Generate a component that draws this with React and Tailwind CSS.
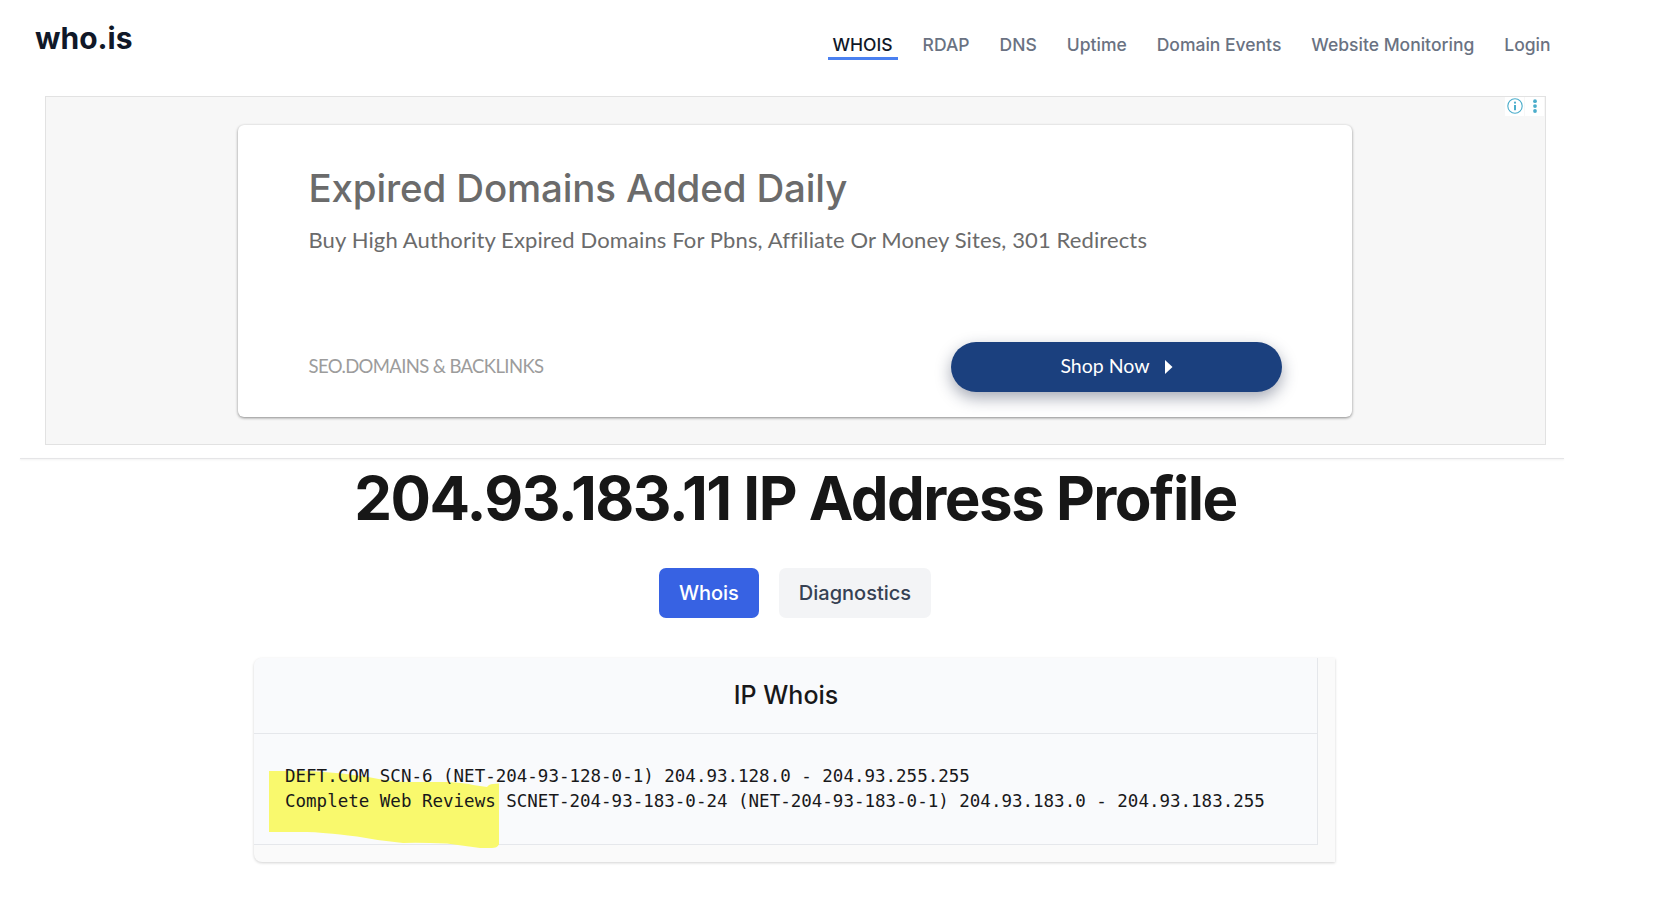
import React from "react";

const navItems = ["RDAP", "DNS", "Uptime", "Domain Events", "Website Monitoring", "Login"];

function Header() {
  return (
    <header className="flex h-[96px] items-start justify-between pl-[35px] pr-[34.5px]">
      <a className="mt-[18px] text-[30px] font-bold leading-[40px] text-gray-900">who.is</a>
      <nav className="mt-[32px] flex gap-5 text-[17.5px] font-medium leading-[25px] text-gray-500">
        <a className="h-[28px] border-b-[3px] border-[#4a80f0] px-[5px] text-gray-900">WHOIS</a>
        {navItems.map((item) => (
          <a key={item} className="px-[5px]">{item}</a>
        ))}
      </nav>
    </header>
  );
}

function AdChoices() {
  return (
    <div className="absolute right-px top-0 flex gap-px">
      <span className="flex size-[19px] items-start justify-center bg-white pt-px">
        <svg viewBox="0 0 16 16" className="size-4">
          <circle cx="8" cy="8" r="7.2" fill="none" stroke="#4badcb" strokeWidth="1.1" />
          <circle cx="8" cy="4.7" r="1.1" fill="#4badcb" />
          <path d="M7 7h2v5.3H7z" fill="#4badcb" />
        </svg>
      </span>
      <span className="flex size-[19px] items-start justify-center bg-white pt-px">
        <svg viewBox="0 0 16 16" className="size-4">
          <circle cx="8" cy="3.2" r="1.9" fill="#4badcb" />
          <circle cx="8" cy="8.1" r="1.9" fill="#4badcb" />
          <circle cx="8" cy="13" r="1.9" fill="#4badcb" />
        </svg>
      </span>
    </div>
  );
}

function Advert() {
  return (
    <section className="relative mx-[45px] flex h-[349px] w-[1501px] border border-[#e2e2e2] bg-[#f7f7f7] pl-[192px] pt-[28px]">
      <div className="flex h-[292px] w-[1114px] flex-col justify-between rounded-[6px] bg-white pb-[25px] pl-[70.5px] pr-[70px] pt-[40px] shadow-[0_1px_3px_rgba(0,0,0,0.45)]">
        <div>
          <h2 className="whitespace-nowrap text-[38.5px] font-medium leading-[46px] tracking-[-0.15px] text-[#6b6b6b]">
            Expired Domains Added Daily
          </h2>
          <p className="mt-[16px] whitespace-nowrap font-[Lato,sans-serif] text-[22px] leading-[26px] tracking-[0.12px] text-[#6b6b6b] [font-variant-ligatures:none]">
            Buy High Authority Expired Domains For Pbns, Affiliate Or Money Sites, 301 Redirects
          </p>
        </div>
        <div className="flex items-center justify-between font-[Lato,sans-serif]">
          <span className="text-[18.5px] tracking-[-0.63px] text-[#9c9c9c]">SEO.DOMAINS &amp; BACKLINKS</span>
          <button className="flex h-[50px] w-[331px] items-center justify-center gap-[15px] rounded-full bg-[#1b407e] text-[19.5px] text-white shadow-[0_6px_16px_rgba(30,40,70,0.4)]">
            <span className="pb-[2px]">Shop Now</span>
            <svg viewBox="0 0 8 14" className="h-[14px] w-2">
              <path d="M0 0L7.5 7L0 14Z" fill="white" />
            </svg>
          </button>
        </div>
      </div>
      <AdChoices />
    </section>
  );
}

function Highlight() {
  return (
    <svg viewBox="269 771 230 78" className="absolute left-[15px] top-[37px] h-[78px] w-[230px]">
      <path
        d="M269 771H310Q345 773 368 777Q392 782 410 782H447Q466 783 473 785L487 787Q489 784 493 784L499 783.5V844.5Q497 848 492 848H480L447 843.5Q420 842.5 403 843Q380 841 357 836.5Q320 832 307 832H269Z"
        fill="#f9f96d"
      />
    </svg>
  );
}

function WhoisCard() {
  return (
    <section className="mt-[40px] h-[204px] w-[1081px] rounded-l-[8px] bg-[#fafafa] shadow-[0_1px_3px_rgba(0,0,0,0.18)]">
      <div className="h-[187px] w-[1064px] rounded-tl-[8px] border-b border-r border-[#e5e7eb] bg-[#f9fafc]">
        <h2 className="h-[76px] border-b border-[#e5e7eb] pl-px text-center text-[25px] font-medium leading-[75px] text-[#18181a]">
          IP Whois
        </h2>
        <div className="relative">
          <Highlight />
          <pre className="relative pl-[31px] pt-[30px] font-['DejaVu_Sans_Mono',monospace] text-[17.5px] leading-[25px] text-[#18181a]">
            {"DEFT.COM SCN-6 (NET-204-93-128-0-1) 204.93.128.0 - 204.93.255.255\nComplete Web Reviews SCNET-204-93-183-0-24 (NET-204-93-183-0-1) 204.93.183.0 - 204.93.183.255"}
          </pre>
        </div>
      </div>
    </section>
  );
}

export default function App() {
  return (
    <div className="min-h-screen bg-white font-[Inter,sans-serif]">
      <div className="w-[1590px]">
        <Header />
        <Advert />
        <div className="ml-[20px] mt-[13px] h-px w-[1544px] bg-[#e5e5e7] shadow-[0_1px_2px_rgba(0,0,0,0.08)]" />
        <main className="flex w-[1589px] flex-col items-center">
          <h1 className="mt-[9px] whitespace-nowrap pl-[2px] text-[60px] font-bold leading-[60px] tracking-tight text-[#171717]">
            204.93.183.11 IP Address Profile
          </h1>
          <div className="mt-[40px] flex gap-5 pl-px text-[20px] font-medium">
            <button className="h-[50px] rounded-[7px] bg-[#3762e3] px-5 text-white">Whois</button>
            <button className="h-[50px] rounded-[7px] bg-gray-100 px-5 text-gray-700">Diagnostics</button>
          </div>
          <WhoisCard />
        </main>
      </div>
    </div>
  );
}
